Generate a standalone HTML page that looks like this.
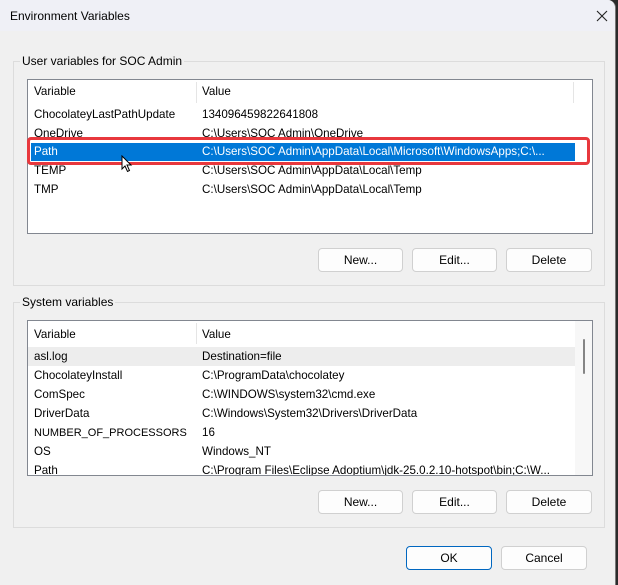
<!DOCTYPE html>
<html><head><style>
*{margin:0;padding:0;box-sizing:border-box}
body{width:618px;height:585px;background:#2b2b2b;font-family:"Liberation Sans",sans-serif;font-size:11.6px;color:#000;position:relative;overflow:hidden}
.win{position:absolute;left:0;top:0;width:616px;height:585px;background:#f0f0f0;border-radius:0 8px 0 0;overflow:hidden;border-right:1px solid #777}
.title{position:absolute;left:0;top:0;width:100%;height:31px;background:#eff0f6;}
.title span{position:absolute;left:10px;top:9px;font-size:12px}
.x{position:absolute;left:595px;top:9px}
.a{position:absolute;white-space:nowrap}
.grp{position:absolute;border:1px solid #dcdcdc}
.leg{position:absolute;background:#f0f0f0;padding:0 2px;font-size:12px}
.list{position:absolute;background:#fff;border:1px solid #828790;overflow:hidden}
.btn{position:absolute;height:24px;background:#fdfdfd;border:1px solid #d0d0d0;border-radius:4px;text-align:center;line-height:22px;font-size:12px}
.row{position:absolute;left:6px;height:19px;line-height:19px;width:560px}
.row b{font-weight:normal;position:absolute;left:168px}
</style></head><body>
<div class="win">
<div class="title"><span>Environment Variables</span>
<svg class="x" width="14" height="14" viewBox="0 0 14 14"><path d="M2 2L12 12M12 2L2 12" stroke="#222" stroke-width="1.1"/></svg></div>

<div class="grp" style="left:13px;top:61px;width:592px;height:225px"></div>
<div class="leg a" style="left:20px;top:54px">User variables for SOC Admin</div>
<div class="list" style="left:27px;top:79px;width:566px;height:155px">
 <div class="a" style="left:168px;top:2px;width:1px;height:21px;background:#e5e5e5"></div>
 <div class="a" style="left:545px;top:2px;width:1px;height:21px;background:#e5e5e5"></div>
 <div class="a" style="left:6px;top:5px">Variable</div><div class="a" style="left:174px;top:5px">Value</div>
 <div class="row" style="top:25px">ChocolateyLastPathUpdate<b>134096459822641808</b></div>
 <div class="row" style="top:44px">OneDrive<b>C:\Users\SOC Admin\OneDrive</b></div>
 <div class="a" style="left:3px;top:63px;width:544px;height:18px;background:#0078d7"></div>
 <div class="row" style="top:62px;color:#fff">Path<b>C:\Users\SOC Admin\AppData\Local\Microsoft\WindowsApps;C:\...</b></div>
 <div class="row" style="top:81px">TEMP<b>C:\Users\SOC Admin\AppData\Local\Temp</b></div>
 <div class="row" style="top:100px">TMP<b>C:\Users\SOC Admin\AppData\Local\Temp</b></div>
</div>
<div class="a" style="left:27px;top:137px;width:563px;height:28px;border:3px solid #e8383d;border-radius:4px"></div>
<svg class="a" style="left:121px;top:155px" width="12" height="18" viewBox="0 0 12 18"><path d="M1 1V14L4 11L6.5 16.5L8.5 15.5L6 10H10Z" fill="#fff" stroke="#000" stroke-width="1"/></svg>
<div class="btn" style="left:318px;top:248px;width:85px">New...</div>
<div class="btn" style="left:412px;top:248px;width:85px">Edit...</div>
<div class="btn" style="left:506px;top:248px;width:86px">Delete</div>

<div class="grp" style="left:13px;top:302px;width:592px;height:226px"></div>
<div class="leg a" style="left:20px;top:295px">System variables</div>
<div class="list" style="left:27px;top:320px;width:566px;height:156px">
 <div class="a" style="left:168px;top:2px;width:1px;height:21px;background:#e5e5e5"></div>
 <div class="a" style="left:547px;top:0;width:18px;height:156px;background:#f7f7f7"></div>
 <div class="a" style="left:555px;top:18px;width:2px;height:35px;background:#858585;border-radius:1px"></div>
 <div class="a" style="left:6px;top:7px">Variable</div><div class="a" style="left:174px;top:7px">Value</div>
 <div class="a" style="left:0;top:26px;width:547px;height:19px;background:#ededed"></div>
 <div class="row" style="top:26px">asl.log<b>Destination=file</b></div>
 <div class="row" style="top:45px">ChocolateyInstall<b>C:\ProgramData\chocolatey</b></div>
 <div class="row" style="top:64px">ComSpec<b>C:\WINDOWS\system32\cmd.exe</b></div>
 <div class="row" style="top:83px">DriverData<b>C:\Windows\System32\Drivers\DriverData</b></div>
 <div class="row" style="top:102px"><span style="font-size:11px">NUMBER_OF_PROCESSORS</span><b>16</b></div>
 <div class="row" style="top:121px">OS<b>Windows_NT</b></div>
 <div class="row" style="top:140px">Path<b>C:\Program Files\Eclipse Adoptium\jdk-25.0.2.10-hotspot\bin;C:\W...</b></div>
</div>
<div class="btn" style="left:318px;top:490px;width:85px">New...</div>
<div class="btn" style="left:412px;top:490px;width:85px">Edit...</div>
<div class="btn" style="left:506px;top:490px;width:86px">Delete</div>

<div class="btn" style="left:406px;top:546px;width:86px;border:1px solid #0067c0">OK</div>
<div class="btn" style="left:501px;top:546px;width:86px">Cancel</div>
</div>
</body></html>
